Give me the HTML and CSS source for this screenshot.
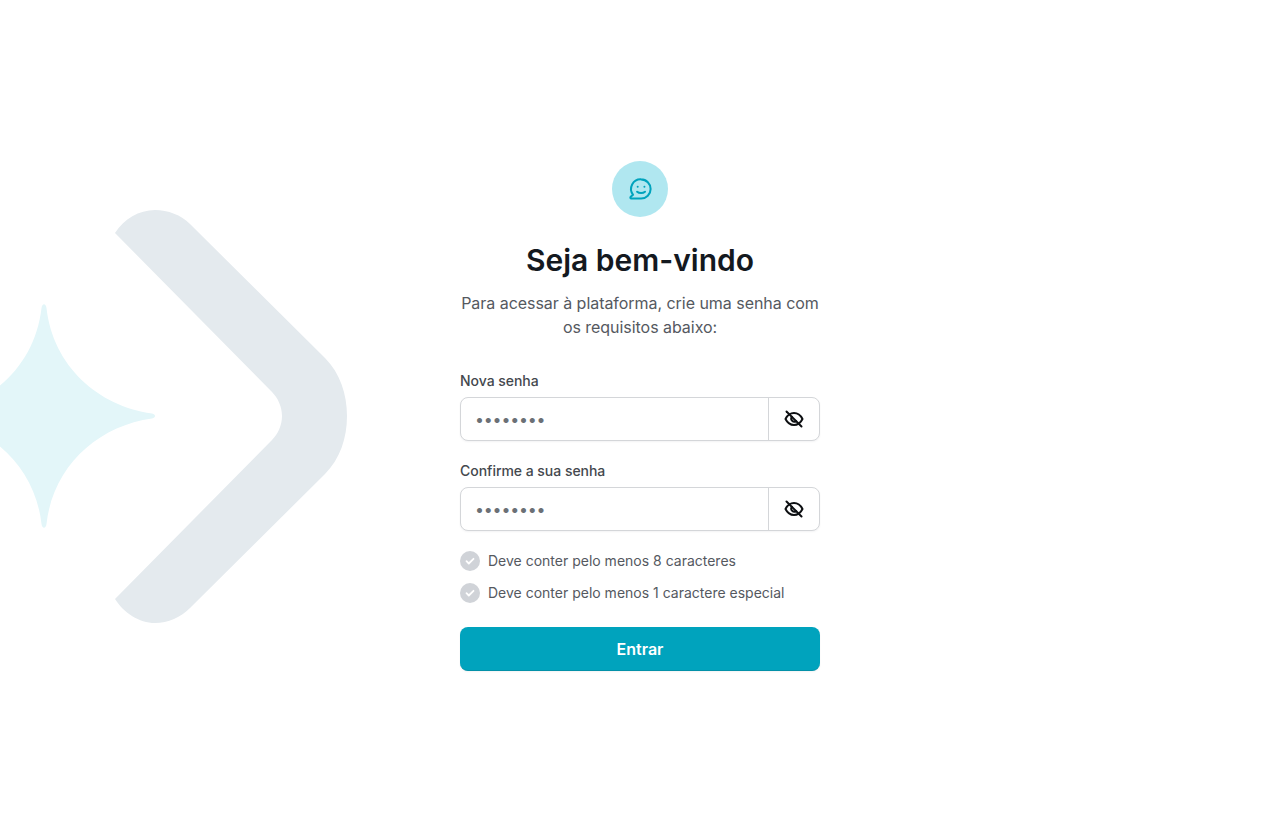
FILE: index.html
```html
<!DOCTYPE html>
<html lang="pt-BR">
<head>
<meta charset="utf-8">
<title>Seja bem-vindo</title>
<link rel="stylesheet" href="styles.css">
</head>
<body>
<svg class="decor" width="360" height="832" viewBox="0 0 360 832" aria-hidden="true">
  <path class="star" d="M41.5 308C42.2 303 45.8 303 46.5 308C53 366 98 406 152 413.5C156 414.2 156 417.8 152 418.500C98 426 53 466 46.500 524C45.800 529 42.200 529 41.500 524C35 466 -10 426 -64 418.500L-64 413.500C-10 406 35 366 41.500 308Z"/>
  <path class="chevron" d="M115 233C124 219 139 210 155 210C168 210 181 215 190 224L325 358C340 373 347 394 347 416C347 438 340 459 325 474L190 608C181 617 168 623 155 623C139 623 124 613 115 599L272 440C278 434 282 425 282 416C282 407 278 398 272 392Z"/>
</svg>
<main class="panel">
  <div class="badge">
    <svg width="27" height="27" viewBox="0 0 24 24" fill="none" stroke="#00a3bd" stroke-width="1.800" stroke-linecap="round" stroke-linejoin="round">
      <path d="M12.500 3A8.500 8.500 0 1 1 12.500 20H3.800C3 20 2.700 19 3.300 18.500L5.400 16.700A8.500 8.500 0 0 1 12.500 3Z"/>
      <path d="M9 14C10.800 15.600 14.200 15.600 16 14"/>
      <path d="M9.500 9.500V9.600M15.500 9.500V9.600"/>
    </svg>
  </div>
  <h1 class="title">Seja bem-vindo</h1>
  <p class="intro">Para acessar à plataforma, crie uma senha com os requisitos abaixo:</p>
  <form class="form">
    <div class="field">
      <label class="label" for="nova">Nova senha</label>
      <div class="control">
        <input class="input" id="nova" type="password" value="password">
        <button class="toggle" type="button" aria-label="Mostrar senha">
          <svg width="24" height="24" viewBox="0 0 24 24" fill="none" stroke="#0d0f12" stroke-width="2" stroke-linecap="round" stroke-linejoin="round">
            <path d="M3.500 12C5.500 8 8.500 6 12 6C15.500 6 18.500 8 20.500 12C18.500 16 15.500 18 12 18C8.500 18 5.500 16 3.500 12Z"/>
            <path d="M9.900 9.900A3 3 0 0 0 14.100 14.100"/>
            <path d="M4.500 4.500L19.500 19.500"/>
          </svg>
        </button>
      </div>
    </div>
    <div class="field">
      <label class="label" for="confirma">Confirme a sua senha</label>
      <div class="control">
        <input class="input" id="confirma" type="password" value="password">
        <button class="toggle" type="button" aria-label="Mostrar senha">
          <svg width="24" height="24" viewBox="0 0 24 24" fill="none" stroke="#0d0f12" stroke-width="2" stroke-linecap="round" stroke-linejoin="round">
            <path d="M3.500 12C5.500 8 8.500 6 12 6C15.500 6 18.500 8 20.500 12C18.500 16 15.500 18 12 18C8.500 18 5.500 16 3.500 12Z"/>
            <path d="M9.900 9.900A3 3 0 0 0 14.100 14.100"/>
            <path d="M4.500 4.500L19.500 19.500"/>
          </svg>
        </button>
      </div>
    </div>
    <ul class="rules">
      <li class="rule">
        <svg class="check" width="20" height="20" viewBox="0 0 20 20"><circle cx="10" cy="10" r="10" fill="#d0d3d8"/><path d="M6.500 10.200L8.800 12.500L13.500 7.800" fill="none" stroke="#fff" stroke-width="1.800" stroke-linecap="round" stroke-linejoin="round"/></svg>
        Deve conter pelo menos 8 caracteres
      </li>
      <li class="rule">
        <svg class="check" width="20" height="20" viewBox="0 0 20 20"><circle cx="10" cy="10" r="10" fill="#d0d3d8"/><path d="M6.500 10.200L8.800 12.500L13.500 7.800" fill="none" stroke="#fff" stroke-width="1.800" stroke-linecap="round" stroke-linejoin="round"/></svg>
        Deve conter pelo menos 1 caractere especial
      </li>
    </ul>
    <button class="submit" type="button">Entrar</button>
  </form>
</main>
</body>
</html>
```
FILE: styles.css
```css
* { box-sizing: border-box; }
html, body { height: 100%; }
body {
  margin: 0;
  background: #fff;
  font-family: Inter, "Liberation Sans", sans-serif;
  color: #14191f;
  display: flex;
  align-items: center;
  justify-content: center;
  overflow: hidden;
}
.decor { position: absolute; left: 0; top: 0; }
.star { fill: #e3f6f9; }
.chevron { fill: #e4eaee; }
.panel { position: relative; width: 360px; display: flex; flex-direction: column; align-items: center; }
.badge {
  width: 56px; height: 56px; border-radius: 50%;
  background: #b0e7f0;
  display: flex; align-items: center; justify-content: center;
}
.title { margin: 24px 0 0; font-size: 30px; line-height: 38px; font-weight: 600; color: #14191f; }
.intro { margin: 12px 0 0; font-size: 16px; line-height: 24px; color: #55595f; text-align: center; letter-spacing: -0.04px; }
.form { width: 100%; margin-top: 32px; display: flex; flex-direction: column; }
.field { display: flex; flex-direction: column; gap: 6px; margin-bottom: 20px; }
.label { font-size: 14px; line-height: 20px; font-weight: 500; color: #44484e; letter-spacing: -0.03px; }
.control {
  height: 44px; display: flex;
  background: #fff;
  border: 1px solid #d4d6d9; border-radius: 8px;
  box-shadow: 0 1px 2px rgba(16, 24, 40, .05);
}
.input {
  flex: 1; min-width: 0; border: 0; outline: 0; background: transparent;
  padding: 0 14px; font: 400 16px Inter, "Liberation Sans", sans-serif; color: #6b7076; letter-spacing: -0.2px;
}
.toggle {
  width: 51px; border: 0; border-left: 1px solid #d4d6d9; background: transparent; padding: 0;
  display: flex; align-items: center; justify-content: center;
}
.rules { list-style: none; margin: 0 0 24px; padding: 0; display: flex; flex-direction: column; gap: 12px; }
.rule { display: flex; align-items: center; gap: 8px; font-size: 14px; line-height: 20px; color: #55595f; }
.check { flex: none; }
.submit {
  height: 44px; border: 0; border-bottom: 1px solid #0391a8; border-radius: 8px;
  background: #00a3bd; color: #fff;
  font: 600 16px/24px Inter, "Liberation Sans", sans-serif;
  box-shadow: 0 1px 2px rgba(16, 24, 40, .05);
}
```
